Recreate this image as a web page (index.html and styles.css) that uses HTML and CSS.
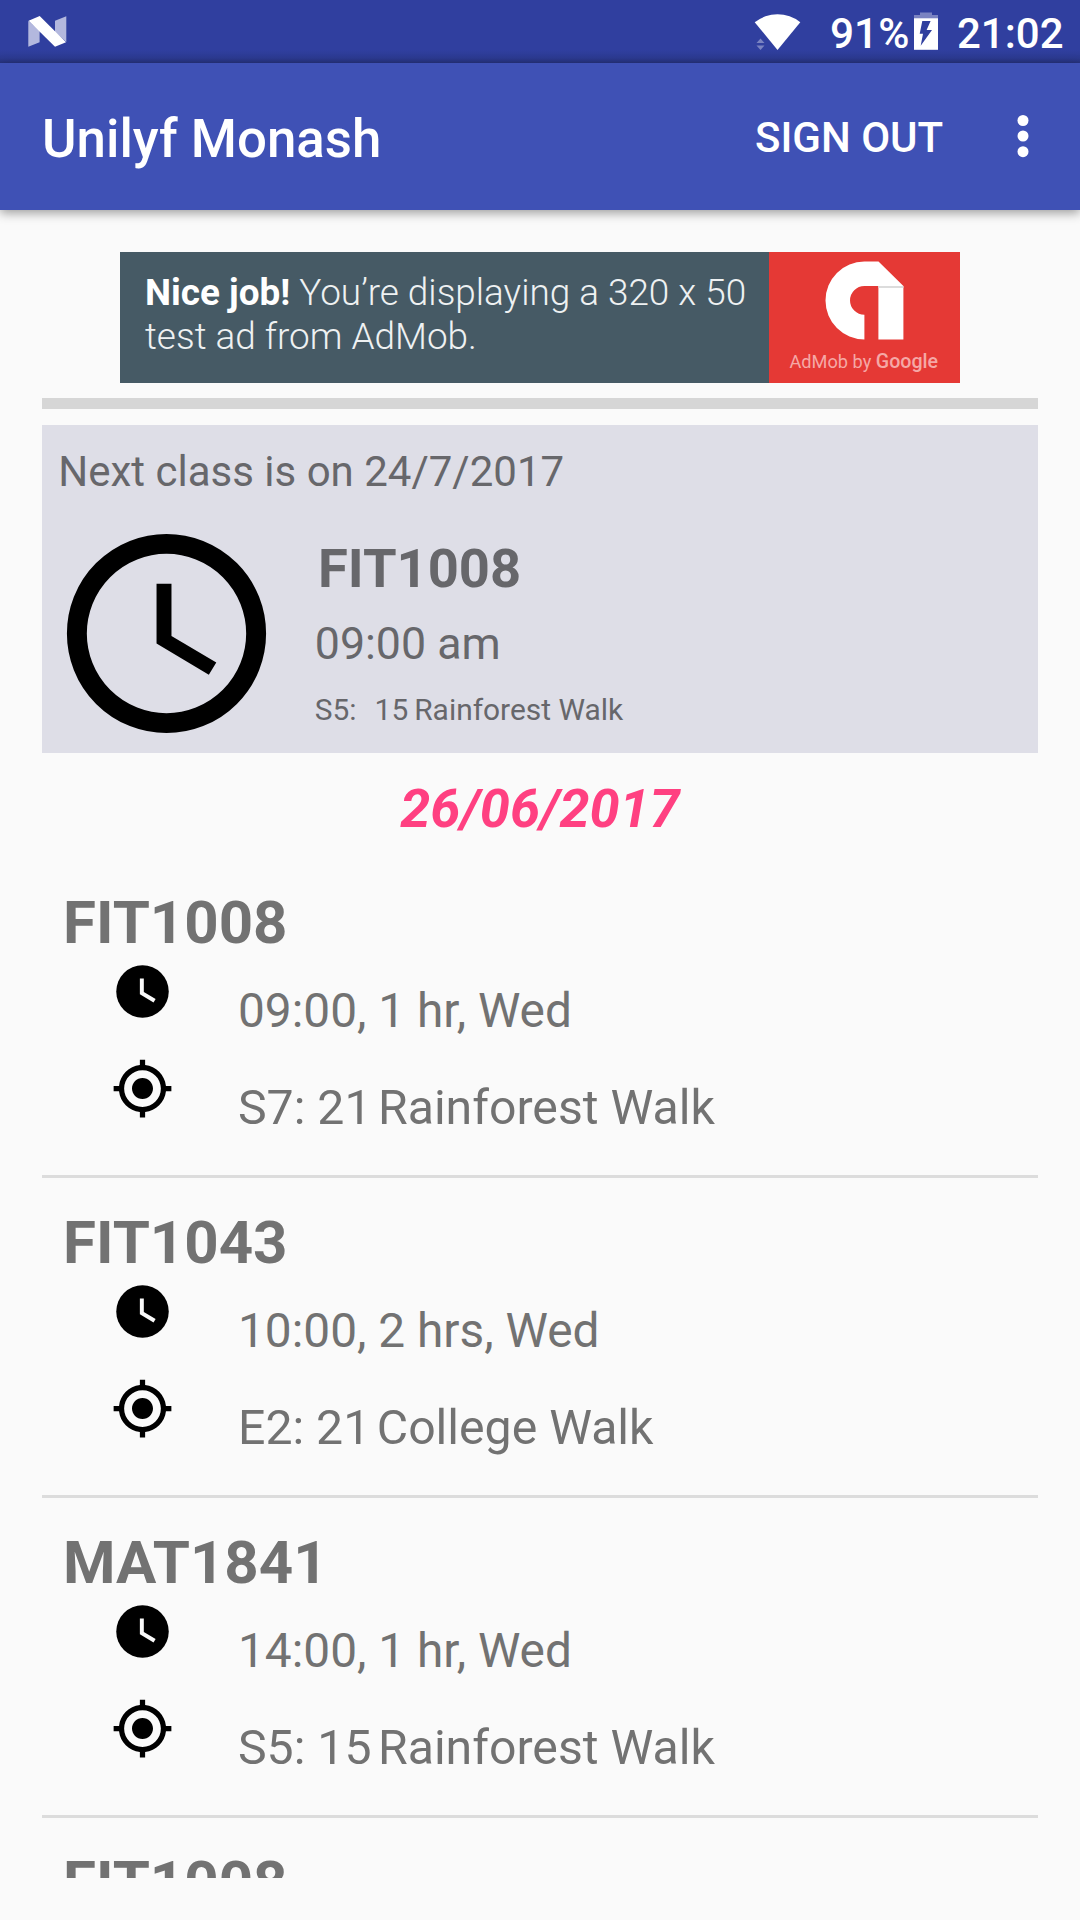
FILE: index.html
```html
<!DOCTYPE html>
<html lang="en">
<head>
<meta charset="utf-8">
<title>Unilyf Monash</title>
<link rel="stylesheet" href="styles.css">
</head>
<body>
<svg class="symbols" aria-hidden="true">
  <symbol id="clock-solid" viewBox="0 0 24 24">
    <circle cx="12" cy="12" r="10"/>
    <path fill="#fafafa" d="M16.2 16.2 11 13V7h1.500v5.200l4.500 2.700z"/>
  </symbol>
  <symbol id="gps" viewBox="0 0 24 24">
    <path d="M12 8c-2.210 0-4 1.790-4 4s1.790 4 4 4 4-1.790 4-4-1.790-4-4-4zm8.940 3c-.460-4.170-3.770-7.480-7.940-7.940V1h-2v2.060C6.830 3.520 3.520 6.830 3.060 11H1v2h2.060c.460 4.170 3.770 7.480 7.940 7.940V23h2v-2.060c4.170-.460 7.480-3.770 7.940-7.940H23v-2h-2.060zM12 19c-3.870 0-7-3.130-7-7s3.130-7 7-7 7 3.130 7 7-3.130 7-7 7z"/>
  </symbol>
</svg>
<div class="screen">
  <header class="status">
    <svg class="nougat" viewBox="28 14 40 36">
      <path fill="#b3b8de" d="M28.300 20.700 39.600 31v11.300L28.300 46.700zM55 20.700l11.300-4.500V42L55 32z"/>
      <path fill="#fff" d="M28.600 20.700 39.700 16 66 42.200 55 46.700z"/>
    </svg>
    <svg class="wifi" viewBox="754 12 48 40">
      <path fill="#fff" d="M754.700 22.200a37 37 0 0 1 45.600 0L777.500 50z"/>
      <path fill="#7a83c1" d="M756.500 43h8l-4-4.500zM756.500 45.500h8l-4 4.500z"/>
    </svg>
    <span class="percent">91%</span>
    <svg class="battery" viewBox="914 12 24 38">
      <path fill="#7a83c1" d="M914 15h6v-2.600h12V15h6v3.200h-24z"/>
      <path fill="#fff" d="M914 18.200h24v31.600h-24z"/>
      <path fill="#303f9f" d="M922.300 21h8.300l-4 9h5.400l-11.300 15.700 2.300-12h-3.300z"/>
    </svg>
    <span class="time">21:02</span>
  </header>
  <div class="appbar">
    <h1 class="title">Unilyf Monash</h1>
    <span class="signout">SIGN OUT</span>
    <svg class="more" viewBox="0 0 12 44"><circle cx="6" cy="6.500" r="5.500"/><circle cx="6" cy="22" r="5.500"/><circle cx="6" cy="37.700" r="5.500"/></svg>
  </div>
  <main class="content">
    <section class="ad">
      <p class="ad-copy"><b>Nice job!</b> You’re displaying a 320 x 50<br>test ad from AdMob.</p>
      <div class="ad-brand">
        <svg class="admob" viewBox="825 261 79 79">
          <path fill="#fff" d="M864.300 261.600h14.200L903.400 286v53.400h-25V286h-14a14.400 14.400 0 0 0 0 28.800v24.600a38.900 38.900 0 0 1 0-77.800z"/>
          <path fill="#dcdcdc" d="M878.400 286h25v2h-25z"/>
        </svg>
        <p class="ad-by">AdMob by <b>Google</b></p>
      </div>
    </section>
    <div class="bar"></div>
    <section class="next">
      <p class="next-label">Next class is on 24/7/2017</p>
      <div class="next-body">
        <svg class="next-clock" viewBox="0 0 24 24"><circle cx="12" cy="12" r="9" fill="none" stroke="#000" stroke-width="2"/><path d="M12.500 7H11v6l5.250 3.150.75-1.230-4.500-2.670z"/></svg>
        <div class="next-info">
          <h2 class="next-unit">FIT1008</h2>
          <p class="next-time">09:00 am</p>
          <p class="next-place"><span>S5:</span><span class="number">15</span><span>Rainforest Walk</span></p>
        </div>
      </div>
    </section>
    <p class="date">26/06/2017</p>
    <div class="list">
      <article class="item">
        <h3 class="unit">FIT1008</h3>
        <div class="row"><svg class="icon"><use href="#clock-solid"/></svg><p>09:00, 1 hr, Wed</p></div>
        <div class="row place"><svg class="icon"><use href="#gps"/></svg><p>S7: 21<span class="street">Rainforest Walk</span></p></div>
      </article>
      <article class="item">
        <h3 class="unit">FIT1043</h3>
        <div class="row"><svg class="icon"><use href="#clock-solid"/></svg><p>10:00, 2 hrs, Wed</p></div>
        <div class="row place"><svg class="icon"><use href="#gps"/></svg><p>E2: 21<span class="street">College Walk</span></p></div>
      </article>
      <article class="item">
        <h3 class="unit">MAT1841</h3>
        <div class="row"><svg class="icon"><use href="#clock-solid"/></svg><p>14:00, 1 hr, Wed</p></div>
        <div class="row place"><svg class="icon"><use href="#gps"/></svg><p>S5: 15<span class="street">Rainforest Walk</span></p></div>
      </article>
      <article class="item">
        <h3 class="unit">FIT1008</h3>
      </article>
    </div>
  </main>
</div>
</body>
</html>
```
FILE: styles.css
```css
* { box-sizing: border-box; margin: 0; padding: 0; }
body { background: #fafafa; font-family: Roboto, sans-serif; color: #727272; }
p, h1, h2, h3, span { white-space: nowrap; }
svg { display: block; flex: none; }
.symbols { display: none; }
.screen { width: 1080px; height: 1920px; overflow: hidden; display: flex; flex-direction: column; }

.status {
  height: 63px; flex: none; display: flex; align-items: flex-start;
  background: linear-gradient(#303f9f 50px, #2c3a91 58px, #27337f 63px);
  color: #fff; font-weight: 500; font-size: 42.4px; line-height: 67px;
}
.nougat { width: 40px; height: 36px; margin: 14px 0 0 28px; }
.wifi { width: 48px; height: 40px; margin: 12px 0 0 686px; }
.percent { margin-left: 28px; width: 84px; }
.battery { width: 24px; height: 38px; margin-top: 12px; }
.time { margin-left: 19px; font-size: 42px; }

.appbar {
  height: 147px; flex: none; display: flex; align-items: flex-start;
  background: #3f51b5; color: #fff;
  box-shadow: 0 3px 10px rgba(0, 0, 0, .38);
}
.title { margin-left: 42px; width: 713px; font-size: 52.800px; font-weight: 500; line-height: 152px; }
.signout { width: 262px; font-size: 42px; font-weight: 500; line-height: 149px; }
.more { width: 12px; height: 44px; margin-top: 51px; fill: #fff; }

.content { flex: 1; padding: 42px 42px 42px; display: flex; flex-direction: column; min-height: 0; }
.ad { width: 840px; height: 131px; flex: none; align-self: center; display: flex; background: #465a65; }
.ad-copy { width: 648.500px; padding: 19px 0 0 25px; color: #eef1f2; font-weight: 300; font-size: 36.900px; line-height: 44px; }
.ad-copy b { font-weight: 700; color: #fff; }
.ad-brand { flex: 1; background: #e53935; }
.admob { width: 79px; height: 79px; margin: 9px 0 0 56.500px; }
.ad-by { margin: 10px 0 0 21px; font-size: 18.200px; line-height: 24px; color: #f5a8a6; }
.ad-by b { font-size: 19.600px; font-weight: 500; }

.bar { height: 11px; flex: none; margin-top: 15px; background: #d6d6d6; }

.next { height: 328px; flex: none; margin-top: 16px; background: #dedee7; color: #67676b; }
.next-label { padding: 17px 0 0 16.300px; font-size: 42px; line-height: 60px; }
.next-body { display: flex; margin-top: 12px; }
.next-clock { width: 239px; height: 239px; margin-left: 5px; }
.next-unit { margin: 19px 0 0 32px; font-size: 54.300px; line-height: 72px; font-weight: 700; }
.next-time { margin: 17px 0 0 28.800px; font-size: 44.700px; line-height: 44px; }
.next-place { display: flex; margin: 21px 0 0 28.800px; font-size: 29.900px; line-height: 46px; }
.number { margin: 0 6px 0 18px; }

.date { height: 110px; flex: none; margin-left: 358.300px; font-size: 54px; line-height: 112px; font-weight: 700; font-style: italic; color: #ff4081; }

.list { flex: 1; min-height: 0; overflow: hidden; }
.item { height: 320px; padding-top: 20px; background: linear-gradient(#dcdcdc, #dcdcdc) 0 312px / 100% 3px no-repeat; }
.unit { margin-left: 21px; font-size: 60px; line-height: 80px; font-weight: 700; }
.row { display: flex; height: 97px; padding-left: 69px; margin-top: -3px; font-size: 47.800px; line-height: 102px; }
.row p { margin-left: 64px; }
.icon { width: 63px; height: 63px; }
.place { margin-top: 0; font-size: 48.200px; }
.street { margin-left: 6.500px; }
```
